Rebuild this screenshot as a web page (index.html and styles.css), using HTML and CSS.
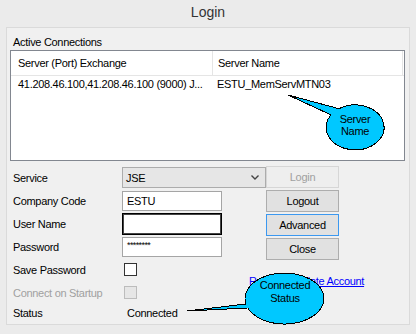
FILE: index.html
```html
<!DOCTYPE html>
<html lang="en">
<head>
    <meta charset="UTF-8">
    <title>Login</title>
    <link rel="stylesheet" href="styles.css">
</head>
<body>
    <div class="window">
        <div class="title">Login</div>

        <div class="panel">
            <div class="group-label">Active Connections</div>

            <div class="listview">
                <div class="lv-header">
                    <div class="col col-exchange">Server (Port) Exchange</div>
                    <div class="col col-name">Server Name</div>
                </div>
                <div class="lv-row">
                    <div class="col col-exchange">41.208.46.100,41.208.46.100 (9000) J...</div>
                    <div class="col col-name">ESTU_MemServMTN03</div>
                </div>
            </div>

            <div class="form">
                <div class="lbl row-1">Service</div>
                <div class="combo row-1">
                    <span>JSE</span>
                    <svg width="8" height="5" viewBox="0 0 8 5"><polyline points="0.5,0.5 4,4 7.5,0.5" fill="none" stroke="#444" stroke-width="1.4"/></svg>
                </div>

                <div class="lbl row-2">Company Code</div>
                <div class="textbox row-2">ESTU</div>

                <div class="lbl row-3">User Name</div>
                <div class="textbox focused row-3"></div>

                <div class="lbl row-4">Password</div>
                <div class="textbox password row-4">********</div>

                <div class="lbl row-5">Save Password</div>
                <div class="check-cell row-5"><span class="checkbox"></span></div>

                <div class="lbl disabled row-6">Connect on Startup</div>
                <div class="check-cell row-6"><span class="checkbox is-disabled"></span></div>

                <div class="lbl row-7">Status</div>
                <div class="status-value row-7">Connected</div>

                <div class="buttons">
                    <button class="btn" disabled>Login</button>
                    <button class="btn">Logout</button>
                    <button class="btn default">Advanced</button>
                    <button class="btn">Close</button>
                </div>

                <a class="account-link" href="#">Request Update Account</a>
            </div>
        </div>

        <!-- callouts drawn over the dialog -->
        <svg class="callouts" width="416" height="334" viewBox="0 0 416 334">
            <path d="M339,108.7 L288,95 L331,114.9 A29,22.5 0 1 0 339,108.7 Z" fill="#00c8ff" stroke="#000" stroke-width="1"/>
            <text x="355" y="122.5">Server</text>
            <text x="355" y="135">Name</text>

            <path d="M245.9,304 L187,311 L247.8,308 A39.5,25.5 0 1 0 245.9,304 Z" fill="#00c8ff" stroke="#000" stroke-width="1"/>
            <text x="285" y="289">Connected</text>
            <text x="285" y="301.5">Status</text>
        </svg>
    </div>
</body>
</html>
```

FILE: styles.css
```css
body {
    margin: 0;
    background-color: #ebebeb;
    font-family: "Liberation Sans", Arial, sans-serif;
    font-size: 11px;
    letter-spacing: -0.3px;
    color: #000;
}
.window {
    position: relative;
    width: 416px;
    height: 334px;
}
.title {
    height: 25px;
    padding-bottom: 2px;
    line-height: 25px;
    text-align: center;
    font-size: 14px;
    letter-spacing: 0;
    color: #333;
}
.panel {
    margin: 0 6px;
    height: 296px;
    border: 1px solid #dadada;
    background-color: #f0f0f0;
    padding: 0 4px 0 3px;
}
.group-label {
    padding: 7px 0 0 3px;
    height: 15px;
    line-height: 15px;
}
.listview {
    height: 109px;
    border: 1px solid #828790;
    background: white;
}
.lv-header {
    display: flex;
    height: 24px;
    border-bottom: 1px solid #e5e5e5;
}
.lv-header .col {
    line-height: 24px;
    border-right: 1px solid #e5e5e5;
}
.lv-row {
    display: flex;
    height: 17px;
    line-height: 17px;
}
.col {
    white-space: nowrap;
    overflow: hidden;
}
.col-exchange {
    width: 194px;
    padding-left: 7px;
}
.col-name {
    width: 184px;
    padding-left: 5px;
}
.form {
    display: grid;
    grid-template-columns: 109px 127px 17px 73px 1fr;
    grid-template-rows: 23px 23px 23px 23px 23px 23px 18px;
    margin: 5px 0 0 3px;
}
.lbl {
    grid-column: 1;
    align-self: center;
}
.lbl.disabled {
    color: #a0a0a0;
}
.row-1 { grid-row: 1; }
.row-2 { grid-row: 2; }
.row-3 { grid-row: 3; }
.row-4 { grid-row: 4; }
.row-5 { grid-row: 5; }
.row-6 { grid-row: 6; }
.row-7 { grid-row: 7; }
.combo {
    grid-column: 2 / span 2;
    align-self: center;
    height: 19px;
    border: 1px solid #acacac;
    background-color: #e6e6e6;
    display: flex;
    align-items: center;
    justify-content: space-between;
    padding: 0 6px 0 3px;
}
.textbox {
    grid-column: 2;
    align-self: center;
    width: 94px;
    height: 18px;
    line-height: 18px;
    border: 1px solid #a5a5a5;
    background: white;
    padding-left: 4px;
}
.textbox.focused {
    height: 20px;
    border-color: #000;
    box-shadow: inset 0 0 0 1px #444;
}
.textbox.password {
    font-size: 9px;
    letter-spacing: -0.6px;
    line-height: 14px;
}
.check-cell {
    grid-column: 2;
    align-self: center;
    display: flex;
    padding-left: 2px;
}
.checkbox {
    width: 11px;
    height: 11px;
    border: 1px solid #333;
    background: white;
}
.checkbox.is-disabled {
    border-color: #bcbcbc;
    background-color: #e6e6e6;
}
.status-value {
    grid-column: 2;
    align-self: center;
    padding-left: 5px;
}
.buttons {
    grid-column: 4;
    grid-row: 1 / span 5;
    display: flex;
    flex-direction: column;
    gap: 2px;
}
.btn {
    height: 22px;
    margin: 0;
    padding: 0;
    border: 1px solid #adadad;
    background-color: #e1e1e1;
    font-family: "Liberation Sans", Arial, sans-serif;
    font-size: 11px;
    letter-spacing: -0.3px;
    color: #000;
}
.btn:disabled {
    border-color: #d6d6d6;
    background-color: #eeeeee;
    color: #a0a0a0;
}
.btn.default {
    border-color: #3b98f0;
}
.account-link {
    grid-column: 3 / span 3;
    grid-row: 5 / span 2;
    align-self: center;
    justify-self: start;
    color: #0000ff;
    white-space: nowrap;
}
.callouts {
    position: absolute;
    left: 0;
    top: 0;
    pointer-events: none;
}
.callouts path {
    shape-rendering: crispEdges;
}
.callouts text {
    font-family: "Liberation Sans", Arial, sans-serif;
    font-size: 11px;
    letter-spacing: -0.3px;
    text-anchor: middle;
    fill: #000;
}
```
